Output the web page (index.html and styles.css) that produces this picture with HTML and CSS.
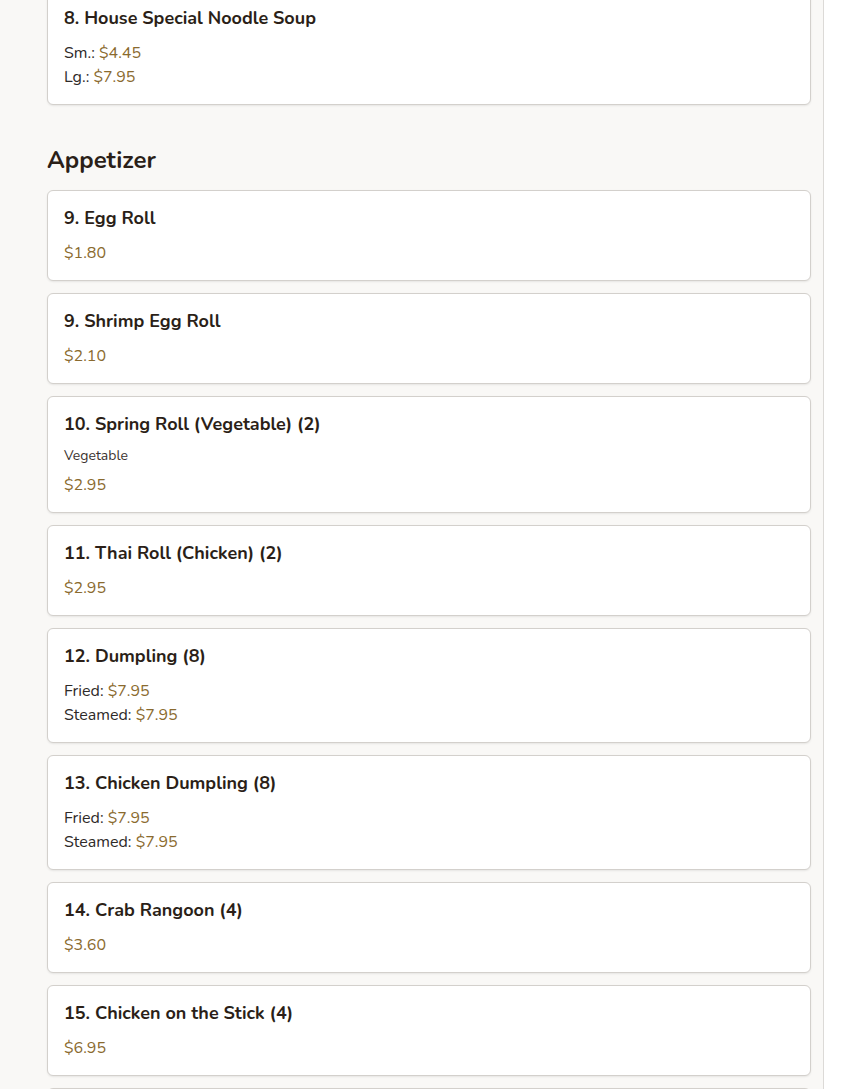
FILE: index.html
```html
<!DOCTYPE html>
<html lang="en">
<head>
<meta charset="utf-8">
<title>Menu</title>
<link rel="stylesheet" href="styles.css">
</head>
<body>
<div class="page">
  <main class="menu">
    <section class="category">
      <div class="item first">
        <h3 class="item-title">8. House Special Noodle Soup</h3>
        <div class="prices">
          <div class="price-line">Sm.: <span class="price">$4.45</span></div>
          <div class="price-line">Lg.: <span class="price">$7.95</span></div>
        </div>
      </div>
    </section>

    <section class="category">
      <h2 class="category-title">Appetizer</h2>
      <div class="item">
        <h3 class="item-title">9. Egg Roll</h3>
        <div class="prices"><div class="price-line"><span class="price">$1.80</span></div></div>
      </div>
      <div class="item">
        <h3 class="item-title">9. Shrimp Egg Roll</h3>
        <div class="prices"><div class="price-line"><span class="price">$2.10</span></div></div>
      </div>
      <div class="item">
        <h3 class="item-title">10. Spring Roll (Vegetable) (2)</h3>
        <p class="item-desc">Vegetable</p>
        <div class="prices"><div class="price-line"><span class="price">$2.95</span></div></div>
      </div>
      <div class="item">
        <h3 class="item-title">11. Thai Roll (Chicken) (2)</h3>
        <div class="prices"><div class="price-line"><span class="price">$2.95</span></div></div>
      </div>
      <div class="item">
        <h3 class="item-title">12. Dumpling (8)</h3>
        <div class="prices">
          <div class="price-line">Fried: <span class="price">$7.95</span></div>
          <div class="price-line">Steamed: <span class="price">$7.95</span></div>
        </div>
      </div>
      <div class="item">
        <h3 class="item-title">13. Chicken Dumpling (8)</h3>
        <div class="prices">
          <div class="price-line">Fried: <span class="price">$7.95</span></div>
          <div class="price-line">Steamed: <span class="price">$7.95</span></div>
        </div>
      </div>
      <div class="item">
        <h3 class="item-title">14. Crab Rangoon (4)</h3>
        <div class="prices"><div class="price-line"><span class="price">$3.60</span></div></div>
      </div>
      <div class="item">
        <h3 class="item-title">15. Chicken on the Stick (4)</h3>
        <div class="prices"><div class="price-line"><span class="price">$6.95</span></div></div>
      </div>
      <div class="item">
        <h3 class="item-title">16. Fried Wonton (10)</h3>
        <div class="prices"><div class="price-line"><span class="price">$3.95</span></div></div>
      </div>
    </section>
  </main>
</div>
</body>
</html>
```

FILE: styles.css
```css
html, body {
  margin: 0;
  padding: 0;
  background: #ffffff;
}

body {
  font-family: "Nunito", "Lato", "Open Sans", sans-serif;
  color: #2b2220;
  overflow: hidden;
  height: 1089px;
}

.page {
  width: 823px;
  min-height: 1200px;
  background: #f9f8f6;
  border-right: 1px solid #dcdad7;
}

.menu {
  padding: 0 12px 0 47px;
}

.category-title {
  margin: 39px 0 14px;
  font-size: 24px;
  line-height: 32px;
  font-weight: 700;
  color: #2b1f18;
}

.item {
  background: #ffffff;
  border: 1px solid #d3d0cc;
  border-radius: 6px;
  box-shadow: 0 1px 2px rgba(0, 0, 0, 0.08);
  padding: 16px 16px 15px;
  margin-bottom: 12px;
}

.item.first {
  margin-top: -10px;
  margin-bottom: 0;
}

.item-title {
  margin: 0 0 12px;
  font-size: 18px;
  line-height: 22px;
  font-weight: 700;
  color: #2b1f18;
}

.item-desc {
  margin: -1px 0 7px;
  font-size: 14px;
  line-height: 20px;
  color: #3b3330;
}

.price-line {
  font-size: 16px;
  line-height: 24px;
  color: #2e2a28;
}

.price {
  color: #8a6a2e;
}
```
